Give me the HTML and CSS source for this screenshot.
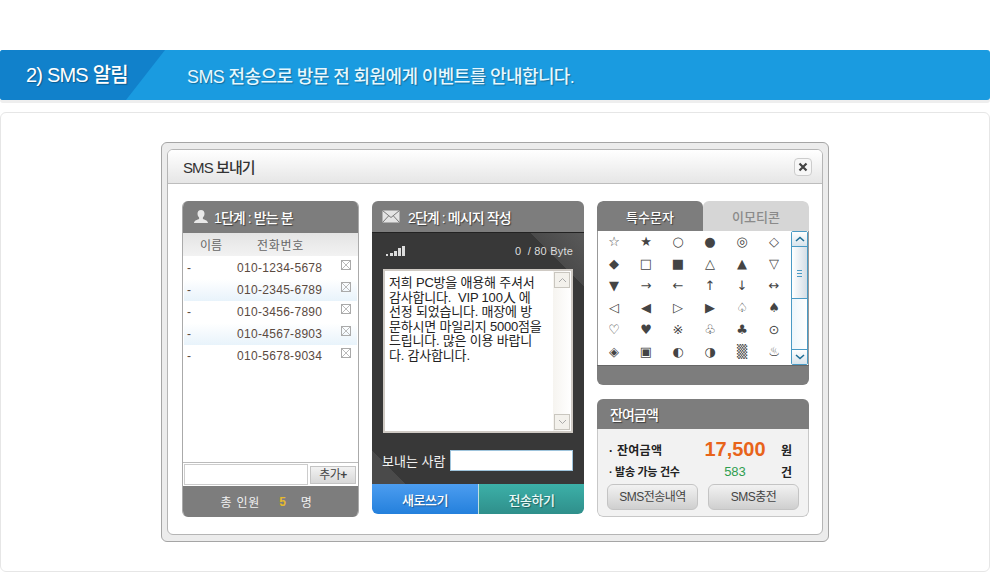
FILE: index.html
```html
<!DOCTYPE html>
<html lang="ko">
<head>
    <meta charset="UTF-8">
    <meta name="viewport" content="width=device-width, initial-scale=1.0">
    <title>SMS 알림</title>
    <link rel="stylesheet" href="styles.css">
</head>
<body>
    <div class="banner">
        <h2 class="banner-title">2) SMS 알림</h2>
        <p class="banner-desc">SMS 전송으로 방문 전 회원에게 이벤트를 안내합니다.</p>
    </div>

    <div class="card">
        <div class="window">
            <div class="window-inner">
                <div class="window-head">
                    <h3>SMS 보내기</h3>
                    <span class="close-btn">
                        <svg width="10" height="10" viewBox="0 0 10 10"><path d="M1.500 1.500l7 7M8.500 1.500l-7 7" stroke="#444" stroke-width="2.200" fill="none"/></svg>
                    </span>
                </div>

                <div class="window-body">
                    <!-- 1단계 -->
                    <div class="panel receivers">
                        <div class="panel-head">
                            <svg width="18" height="16" viewBox="0 0 18 16"><path d="M9 1c2.300 0 3.500 1.700 3.500 3.800 0 1.700-.8 3-1.600 3.800v1.300c1.500.7 5.100 1.500 5.100 4.100H2c0-2.600 3.600-3.400 5.100-4.100V8.600C6.300 7.800 5.500 6.500 5.500 4.800 5.500 2.700 6.700 1 9 1z" fill="#e8e8e8"/></svg>
                            <span>1단계 : 받는 분</span>
                        </div>
                        <div class="list-head">
                            <span class="col-name">이름</span>
                            <span class="col-phone">전화번호</span>
                        </div>
                        <ul class="list">
                            <li><span class="col-name">-</span><span class="col-phone">010-1234-5678</span><i class="del"></i></li>
                            <li class="alt"><span class="col-name">-</span><span class="col-phone">010-2345-6789</span><i class="del"></i></li>
                            <li><span class="col-name">-</span><span class="col-phone">010-3456-7890</span><i class="del"></i></li>
                            <li class="alt"><span class="col-name">-</span><span class="col-phone">010-4567-8903</span><i class="del"></i></li>
                            <li><span class="col-name">-</span><span class="col-phone">010-5678-9034</span><i class="del"></i></li>
                        </ul>
                        <div class="add-row">
                            <span class="add-input"></span>
                            <span class="add-btn">추가<b>+</b></span>
                        </div>
                        <div class="panel-foot">
                            <span class="total-label">총 인원</span><b>5</b><span>명</span>
                        </div>
                    </div>

                    <!-- 2단계 -->
                    <div class="panel message">
                        <div class="panel-head">
                            <svg width="20" height="14" viewBox="0 0 20 14"><rect x=".5" y=".5" width="17" height="12" fill="#e4e4e4"/><path d="M.5.5L9 7.500 17.500.5M.5 12.500L6.500 6M17.500 12.500L11.500 6" stroke="#777" fill="none"/></svg>
                            <span>2단계 : 메시지 작성</span>
                        </div>
                        <div class="message-body">
                            <div class="status">
                                <svg width="20" height="12" viewBox="0 0 20 12"><path d="M0 9h2v2H0zM4 8h3v3H4zM8 6h3v5H8zM12 3h3v8h-3zM16 1h3v10h-3z" fill="#ddd"/></svg>
                                <span class="bytes">0 &nbsp;/ 80 Byte</span>
                            </div>
                            <div class="textbox">
                                <p>저희 PC방을 애용해 주셔서<br>감사합니다.&nbsp; VIP 100人 에<br>선정 되었습니다. 매장에 방<br>문하시면 마일리지 5000점을<br>드립니다. 많은 이용 바랍니<br>다. 감사합니다.</p>
                                <div class="scroll-gray">
                                    <span><svg width="9" height="6" viewBox="0 0 9 6"><path d="M1 5l3.500-3.500L8 5" stroke="#aaa" fill="none"/></svg></span>
                                    <span><svg width="9" height="6" viewBox="0 0 9 6"><path d="M1 1l3.500 3.500L8 1" stroke="#aaa" fill="none"/></svg></span>
                                </div>
                            </div>
                            <div class="sender">
                                <label>보내는 사람</label>
                                <span class="sender-input"></span>
                            </div>
                        </div>
                        <div class="actions">
                            <span class="btn-new">새로쓰기</span>
                            <span class="btn-send">전송하기</span>
                        </div>
                    </div>

                    <!-- 특수문자 / 잔여금액 -->
                    <div class="side">
                        <div class="panel symbols">
                            <div class="tabs">
                                <span class="tab on">특수문자</span>
                                <span class="tab">이모티콘</span>
                            </div>
                            <div class="symbol-body">
                                <div class="symbol-grid">
                                    <span>☆</span><span>★</span><span>○</span><span>●</span><span>◎</span><span>◇</span>
                                    <span>◆</span><span>□</span><span>■</span><span>△</span><span>▲</span><span>▽</span>
                                    <span>▼</span><span>→</span><span>←</span><span>↑</span><span>↓</span><span>↔</span>
                                    <span>◁</span><span>◀</span><span>▷</span><span>▶</span><span>♤</span><span>♠</span>
                                    <span>♡</span><span>♥</span><span>※</span><span>♧</span><span>♣</span><span>⊙</span>
                                    <span>◈</span><span>▣</span><span>◐</span><span>◑</span><span>▒</span><span>♨</span>
                                </div>
                                <div class="scroll-blue">
                                    <span class="arrow"><svg width="10" height="6" viewBox="0 0 10 6"><path d="M1 5l4-3.500L9 5" stroke="#1f6f96" stroke-width="1.600" fill="none"/></svg></span>
                                    <span class="thumb"></span>
                                    <span class="arrow end"><svg width="10" height="6" viewBox="0 0 10 6"><path d="M1 1l4 3.500L9 1" stroke="#1f6f96" stroke-width="1.600" fill="none"/></svg></span>
                                </div>
                            </div>
                            <div class="symbol-foot"></div>
                        </div>

                        <div class="panel balance">
                            <div class="panel-head">잔여금액</div>
                            <div class="balance-body">
                                <div class="balance-row first">
                                    <span class="label">· 잔여금액</span>
                                    <span class="amount">17,500</span>
                                    <span class="unit">원</span>
                                </div>
                                <div class="balance-row">
                                    <span class="label small">· 발송 가능 건수</span>
                                    <span class="count">583</span>
                                    <span class="unit">건</span>
                                </div>
                                <div class="balance-btns">
                                    <span>SMS전송내역</span>
                                    <span>SMS충전</span>
                                </div>
                            </div>
                        </div>
                    </div>
                </div>
            </div>
        </div>
    </div>
</body>
</html>
```

FILE: styles.css
```css
* {
    box-sizing: border-box;
}

body {
    margin: 0;
    padding-top: 50px;
    height: 572px;
    overflow: hidden;
    background: #fff;
    font-family: "Liberation Sans", "Noto Sans CJK KR", sans-serif;
    font-size: 12px;
    color: #333;
}

/* 상단 배너 */
.banner {
    display: flex;
    align-items: center;
    height: 50px;
    background: #1a9be0;
    border-radius: 3px;
    overflow: hidden;
    box-shadow: 0 3px 0 #eee;
    color: #fff;
}

.banner-title {
    width: 165px;
    height: 50px;
    margin: 0;
    padding-left: 26px;
    line-height: 51px;
    font-size: 20px;
    font-weight: 500;
    letter-spacing: -0.8px;
    white-space: nowrap;
    background: #1181cb;
    clip-path: polygon(0 0, 100% 0, 126px 100%, 0 100%);
    text-shadow: 1px 1px 1px rgba(0, 0, 0, 0.3);
}

.banner-desc {
    margin: 0 0 0 22px;
    font-size: 18px;
    font-weight: 500;
    letter-spacing: -0.6px;
    color: #e6f8ff;
    text-shadow: 1px 1px 1px rgba(0, 0, 0, 0.3);
}

/* 카드 */
.card {
    height: 460px;
    margin-top: 12px;
    padding-top: 29px;
    border: 1px solid #e6e6e6;
    border-radius: 6px;
}

.window {
    width: 668px;
    height: 400px;
    margin: 0 auto;
    padding: 6px 5px;
    background: #ececec;
    border: 1px solid #a5a5a5;
    border-radius: 6px;
}

.window-inner {
    height: 386px;
    background: #fff;
    border: 1px solid #b5b5b5;
    border-radius: 6px;
    overflow: hidden;
}

.window-head {
    display: flex;
    align-items: center;
    justify-content: space-between;
    height: 34px;
    padding: 0 10px 0 15px;
    background: linear-gradient(#fff, #e6e6e6);
    border-bottom: 1px solid #bdbdbd;
}

.window-head h3 {
    margin: 0;
    font-size: 15px;
    font-weight: 500;
    letter-spacing: -0.9px;
    color: #333;
}

.close-btn {
    display: flex;
    align-items: center;
    justify-content: center;
    width: 18px;
    height: 18px;
    background: #f7f7f7;
    border: 1px solid #ccc;
    border-radius: 4px;
}

.window-body {
    display: flex;
    align-items: flex-start;
    gap: 13px;
    padding: 17px 0 0 14px;
}

/* 공통 패널 */
.panel {
    border-radius: 6px;
    overflow: hidden;
}

.panel-head {
    display: flex;
    align-items: center;
    gap: 5px;
    height: 32px;
    padding-left: 10px;
    background: #7d7d7d;
    font-size: 14px;
    font-weight: 500;
    letter-spacing: -0.9px;
    color: #fff;
    text-shadow: 1px 1px 1px rgba(0, 0, 0, 0.5);
}

/* 받는 분 */
.receivers {
    width: 177px;
    height: 316px;
    display: flex;
    flex-direction: column;
    border: 1px solid #aaa;
    border-top: 0;
    border-bottom: 0;
}

.receivers .panel-head {
    margin: 0 -1px;
    padding-left: 10px;
    gap: 4px;
}

.list-head {
    display: flex;
    align-items: center;
    height: 23px;
    background: linear-gradient(#e4e4e4, #f2f2f2);
    font-size: 12px;
    color: #666;
}

.list-head .col-name {
    width: 74px;
    padding-left: 17px;
}

.list-head .col-phone {
    letter-spacing: 0.7px;
}

.list {
    flex: 1;
    margin: 0;
    padding: 1px 1px 0;
    list-style: none;
}

.list li {
    display: flex;
    align-items: center;
    height: 22px;
    font-size: 12px;
    color: #5b4a3f;
}

.list li.alt {
    background: linear-gradient(#fff, #e8f3fb);
}

.list .col-name {
    width: 53px;
    padding-left: 3px;
}

.list .col-phone {
    width: 104px;
    letter-spacing: 0.3px;
}

.del {
    width: 10px;
    height: 10px;
    margin-top: -6px;
    border: 1px solid #aaa;
    background:
        linear-gradient(45deg, transparent 46%, #bbb 46%, #bbb 54%, transparent 54%),
        linear-gradient(-45deg, transparent 46%, #bbb 46%, #bbb 54%, transparent 54%);
}

.add-row {
    display: flex;
    align-items: center;
    gap: 2px;
    height: 24px;
    padding: 0 1px;
    border-top: 1px solid #bbb;
}

.add-input {
    width: 124px;
    height: 21px;
    border: 1px solid #ccc;
}

.add-btn {
    width: 46px;
    height: 18px;
    line-height: 17px;
    text-align: center;
    font-size: 12px;
    letter-spacing: -0.5px;
    color: #444;
    background: linear-gradient(#f2f2f2, #d8d8d8);
    border: 1px solid #c4c4c4;
}

.panel-foot {
    display: flex;
    align-items: center;
    justify-content: center;
    gap: 14px;
    height: 31px;
    margin: 0 -1px;
    padding-right: 8px;
    background: #7d7d7d;
    color: #f0f0f0;
    letter-spacing: 0.8px;
}

.panel-foot b {
    color: #e5b92f;
}

.total-label {
    margin-right: 5px;
}

/* 메시지 작성 */
.message {
    width: 212px;
    height: 313px;
}

.message .panel-head {
    height: 32px;
    gap: 6px;
    border-bottom: 1px solid #222;
}

.message-body {
    height: 251px;
    padding: 0 11px;
    background:
        linear-gradient(225deg, #5a5a5a 0, #4a4a4a 38px, transparent 38px),
        linear-gradient(45deg, #4a4a4a 0, #4a4a4a 24px, transparent 24px),
        #383838;
}

.status {
    display: flex;
    align-items: center;
    justify-content: space-between;
    height: 36px;
    padding-left: 3px;
}

.bytes {
    font-size: 11px;
    letter-spacing: 0.2px;
    color: #ddd;
}

.textbox {
    display: flex;
    justify-content: space-between;
    height: 164px;
    background: #fff;
    border: 2px solid #cfcac4;
}

.textbox p {
    margin: 0;
    padding: 5px 0 0 4px;
    font-size: 13px;
    line-height: 14.500px;
    letter-spacing: -0.2px;
    color: #222;
    white-space: nowrap;
}

.scroll-gray {
    display: flex;
    flex-direction: column;
    justify-content: space-between;
    width: 18px;
    padding: 1px;
    background: linear-gradient(90deg, #f6f4f0, #fff);
}

.scroll-gray span {
    display: flex;
    align-items: center;
    justify-content: center;
    height: 16px;
    background: #f3f1ec;
    border: 1px solid #c9c6bf;
}

.sender {
    display: flex;
    align-items: center;
    justify-content: space-between;
    margin: 17px 0 0 -1px;
    font-size: 13px;
    color: #f2f2f2;
}

.sender-input {
    width: 123px;
    height: 21px;
    background: #fff;
    border: 1px solid #9fc4dc;
}

.actions {
    display: flex;
    height: 30px;
}

.actions span {
    display: flex;
    align-items: center;
    justify-content: center;
    font-size: 13px;
    font-weight: 500;
    letter-spacing: -0.4px;
    text-shadow: 1px 1px 1px rgba(0, 0, 0, 0.35);
}

.btn-new {
    width: 106px;
    color: #fff;
    background: linear-gradient(#4c9df0, #2480dc);
}

.btn-send {
    width: 106px;
    color: #eafaf8;
    background: linear-gradient(#3cb0a8, #2f8f8b);
    border-left: 1px solid #bfe0e0;
}

/* 특수문자 */
.side {
    display: flex;
    flex-direction: column;
    gap: 14px;
    width: 212px;
}

.symbols {
    height: 184px;
}

.tabs {
    display: flex;
    height: 30px;
    background: #fff;
}

.tab {
    flex: 1;
    display: flex;
    align-items: center;
    justify-content: center;
    font-size: 13px;
    font-weight: 500;
    color: #8a8a8a;
    background: #d6d6d6;
    border-radius: 6px 6px 0 0;
}

.tab.on {
    flex: 0 0 106px;
    color: #fff;
    background: #7d7d7d;
    text-shadow: 1px 1px 1px rgba(0, 0, 0, 0.5);
}

.symbol-body {
    display: flex;
    height: 134px;
    border-left: 1px solid #999;
    border-right: 1px solid #999;
}

.symbol-grid {
    display: grid;
    grid-template-columns: repeat(6, 32px);
    grid-auto-rows: 22px;
    width: 193px;
}

.symbol-grid span {
    display: flex;
    align-items: center;
    justify-content: center;
    font-family: "DejaVu Sans", "Noto Sans CJK KR", sans-serif;
    font-size: 13px;
    line-height: 22px;
    color: #444;
}

.scroll-blue {
    display: flex;
    flex-direction: column;
    width: 17px;
    background: linear-gradient(90deg, #eef6fb, #fff);
    border: 1px solid #4a9ac4;
    border-radius: 2px;
}

.scroll-blue .arrow {
    display: flex;
    align-items: center;
    justify-content: center;
    height: 15px;
    background: linear-gradient(#fff, #d8e4ec);
    border-bottom: 1px solid #4a9ac4;
}

.scroll-blue .arrow.end {
    margin-top: auto;
    border-top: 1px solid #4a9ac4;
    border-bottom: 0;
}

.scroll-blue .thumb {
    height: 52px;
    background: linear-gradient(90deg, #fff, #d4dee6);
    border-bottom: 1px solid #4a9ac4;
    position: relative;
}

/* 스크롤 손잡이 무늬 */
.scroll-blue .thumb::after {
    content: "";
    position: absolute;
    left: 5px;
    top: 23px;
    width: 5px;
    height: 5px;
    border-top: 1px solid #4a9ac4;
    border-bottom: 1px solid #4a9ac4;
    background: linear-gradient(#4a9ac4, #4a9ac4) center / 100% 1px no-repeat;
}

.symbol-foot {
    height: 20px;
    background: #7d7d7d;
    border-top: 1px solid #666;
}

/* 잔여금액 */
.balance {
    height: 118px;
    border-radius: 6px;
}

.balance .panel-head {
    height: 30px;
    padding-left: 13px;
}

.balance-body {
    height: 88px;
    padding: 8px 9px 0;
    background: #f2f2f2;
    border: 1px solid #c8c8c8;
    border-top: 0;
    border-radius: 0 0 6px 6px;
}

.balance-row {
    display: flex;
    align-items: center;
    height: 20px;
    padding-left: 2px;
    font-size: 12px;
    font-weight: 700;
    color: #222;
}

.balance-row.first {
    height: 24px;
}

.balance-row .label {
    width: 91px;
    letter-spacing: 0.3px;
    white-space: nowrap;
}

.balance-row .label.small {
    font-size: 11px;
    letter-spacing: -0.3px;
}

.amount {
    width: 70px;
    font-size: 20px;
    text-align: center;
    color: #e8641a;
}

.count {
    width: 70px;
    font-size: 13px;
    font-weight: 400;
    text-align: center;
    color: #2f9e4f;
}

.unit {
    margin-left: 11px;
}

.balance-btns {
    display: flex;
    gap: 10px;
    margin-top: 3px;
}

.balance-btns span {
    width: 91px;
    height: 26px;
    line-height: 25px;
    text-align: center;
    font-size: 12px;
    letter-spacing: -0.5px;
    color: #444;
    background: linear-gradient(#f2f2f2, #cfcfcf);
    border: 1px solid #c4c4c4;
    border-radius: 6px;
}
```
